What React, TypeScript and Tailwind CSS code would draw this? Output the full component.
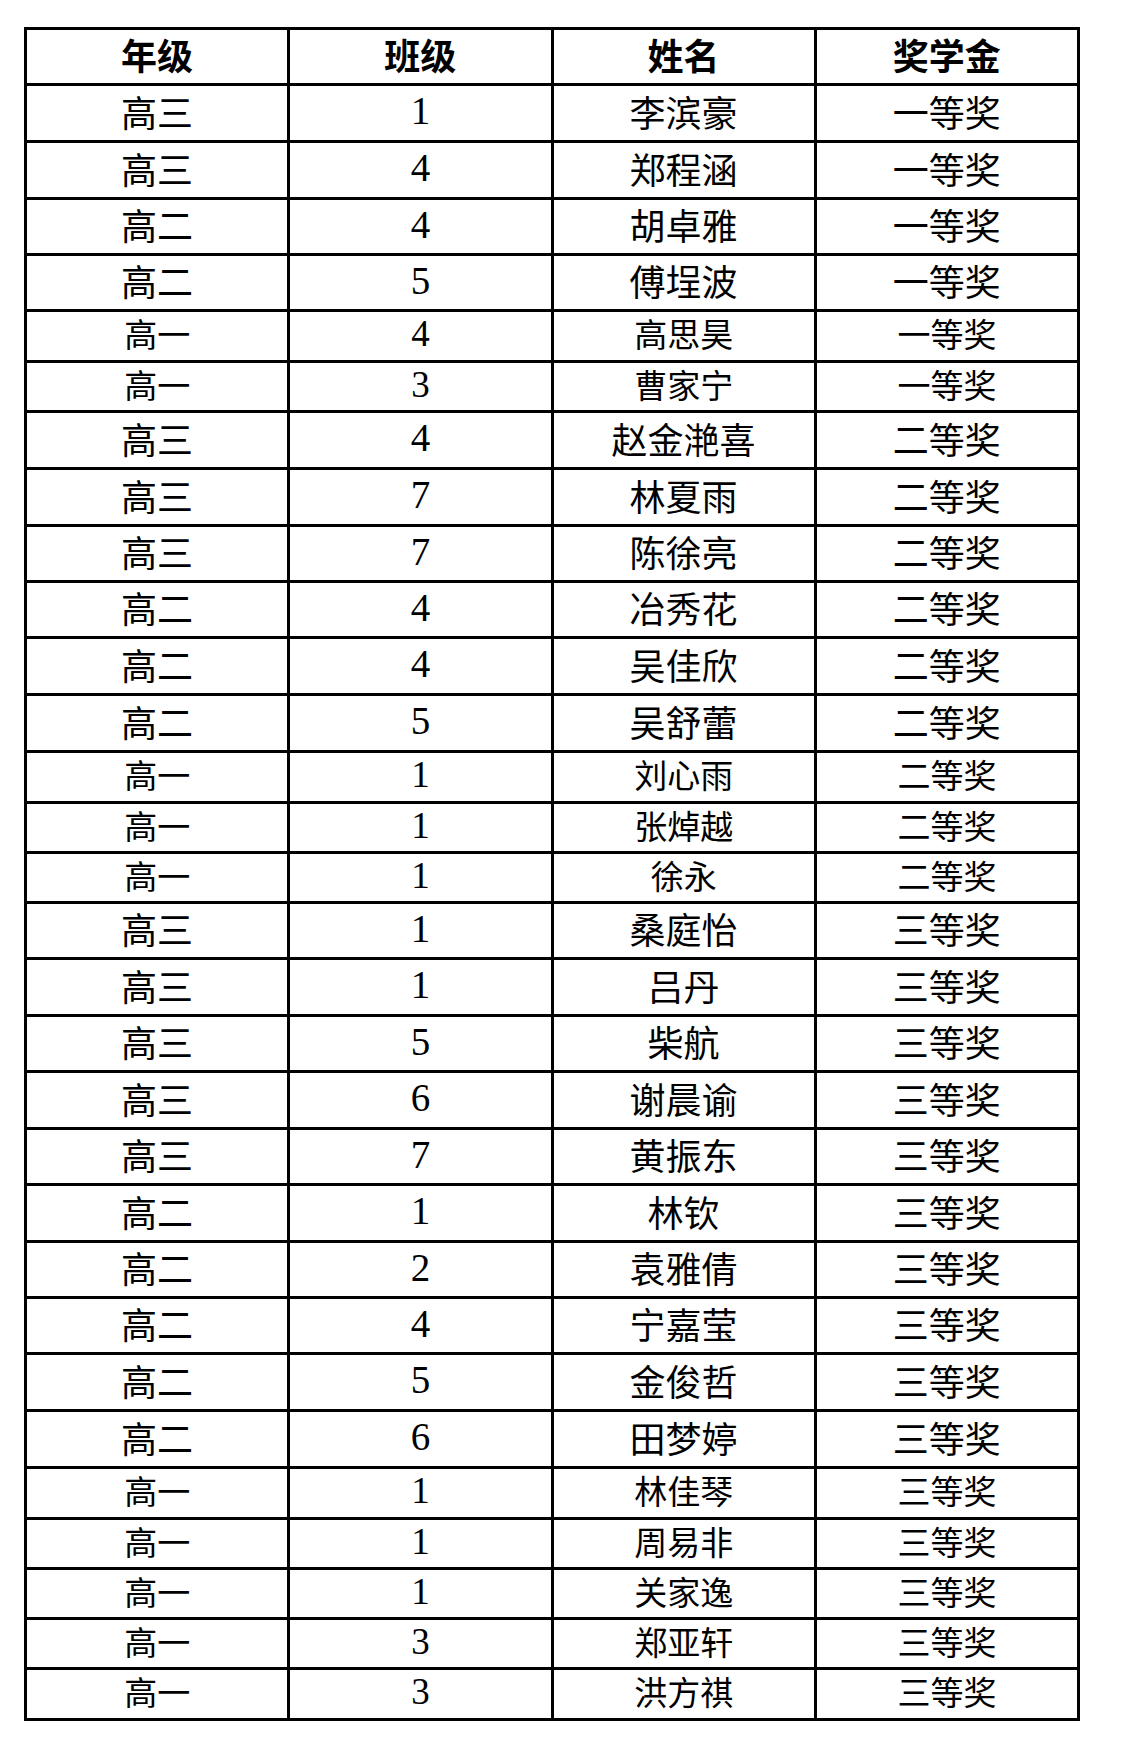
import React from "react"

type Row = {
  grade: string
  cls: string
  name: string
  award: string
  h: string
  small?: boolean
}

const ROWS: Row[] = [
  { grade: "高三", cls: "1", name: "李滨豪", award: "一等奖", h: "h-[54px]" },
  { grade: "高三", cls: "4", name: "郑程涵", award: "一等奖", h: "h-[54px]" },
  { grade: "高二", cls: "4", name: "胡卓雅", award: "一等奖", h: "h-[53px]" },
  { grade: "高二", cls: "5", name: "傅埕波", award: "一等奖", h: "h-[53px]" },
  { grade: "高一", cls: "4", name: "高思昊", award: "一等奖", h: "h-[48px]", small: true },
  { grade: "高一", cls: "3", name: "曹家宁", award: "一等奖", h: "h-[47px]", small: true },
  { grade: "高三", cls: "4", name: "赵金滟喜", award: "二等奖", h: "h-[54px]" },
  { grade: "高三", cls: "7", name: "林夏雨", award: "二等奖", h: "h-[54px]" },
  { grade: "高三", cls: "7", name: "陈徐亮", award: "二等奖", h: "h-[53px]" },
  { grade: "高二", cls: "4", name: "冶秀花", award: "二等奖", h: "h-[53px]" },
  { grade: "高二", cls: "4", name: "吴佳欣", award: "二等奖", h: "h-[54px]" },
  { grade: "高二", cls: "5", name: "吴舒蕾", award: "二等奖", h: "h-[54px]" },
  { grade: "高一", cls: "1", name: "刘心雨", award: "二等奖", h: "h-[48px]", small: true },
  { grade: "高一", cls: "1", name: "张焯越", award: "二等奖", h: "h-[47px]", small: true },
  { grade: "高一", cls: "1", name: "徐永", award: "二等奖", h: "h-[47px]", small: true },
  { grade: "高三", cls: "1", name: "桑庭怡", award: "三等奖", h: "h-[53px]" },
  { grade: "高三", cls: "1", name: "吕丹", award: "三等奖", h: "h-[54px]" },
  { grade: "高三", cls: "5", name: "柴航", award: "三等奖", h: "h-[53px]" },
  { grade: "高三", cls: "6", name: "谢晨谕", award: "三等奖", h: "h-[54px]" },
  { grade: "高三", cls: "7", name: "黄振东", award: "三等奖", h: "h-[53px]" },
  { grade: "高二", cls: "1", name: "林钦", award: "三等奖", h: "h-[54px]" },
  { grade: "高二", cls: "2", name: "袁雅倩", award: "三等奖", h: "h-[53px]" },
  { grade: "高二", cls: "4", name: "宁嘉莹", award: "三等奖", h: "h-[53px]" },
  { grade: "高二", cls: "5", name: "金俊哲", award: "三等奖", h: "h-[54px]" },
  { grade: "高二", cls: "6", name: "田梦婷", award: "三等奖", h: "h-[54px]" },
  { grade: "高一", cls: "1", name: "林佳琴", award: "三等奖", h: "h-[48px]", small: true },
  { grade: "高一", cls: "1", name: "周易非", award: "三等奖", h: "h-[47px]", small: true },
  { grade: "高一", cls: "1", name: "关家逸", award: "三等奖", h: "h-[47px]", small: true },
  { grade: "高一", cls: "3", name: "郑亚轩", award: "三等奖", h: "h-[47px]", small: true },
  { grade: "高一", cls: "3", name: "洪方祺", award: "三等奖", h: "h-[48px]", small: true },
]

const CJK = "font-['Noto_Sans_CJK_SC',sans-serif]"
const SERIF = "font-['Liberation_Serif','Noto_Sans_CJK_SC',serif]"

function Cell({ children, className }: { children: React.ReactNode; className: string }) {
  return <div className={`flex items-center justify-center bg-white text-black leading-none ${className}`}>{children}</div>
}

export default function App() {
  return (
    <div className="min-h-[1752px] w-[1129px] bg-white pt-[27px] pl-[24px]">
      <div className="grid w-[1056px] grid-cols-4 gap-[3px] bg-black p-[3px]">
        {/* Header */}
        {["年级", "班级", "姓名", "奖学金"].map((h) => (
          <Cell key={h} className={`h-[53px] pb-[5px] ${CJK} text-[36px] font-bold`}>
            {h}
          </Cell>
        ))}

        {/* Rows */}
        {ROWS.map((r, i) => {
          const cjkSize = r.small ? "text-[33px]" : "text-[36px]"
          const numSize = r.small ? "text-[37px]" : "text-[39px]"
          return (
            <React.Fragment key={i}>
              <Cell className={`${r.h} pb-[5px] ${CJK} ${cjkSize}`}>{r.grade}</Cell>
              <Cell className={`${r.h} pb-[5px] ${SERIF} ${numSize}`}>{r.cls}</Cell>
              <Cell className={`${r.h} pb-[5px] ${CJK} ${cjkSize}`}>{r.name}</Cell>
              <Cell className={`${r.h} pb-[5px] ${CJK} ${cjkSize}`}>{r.award}</Cell>
            </React.Fragment>
          )
        })}
      </div>
    </div>
  )
}
